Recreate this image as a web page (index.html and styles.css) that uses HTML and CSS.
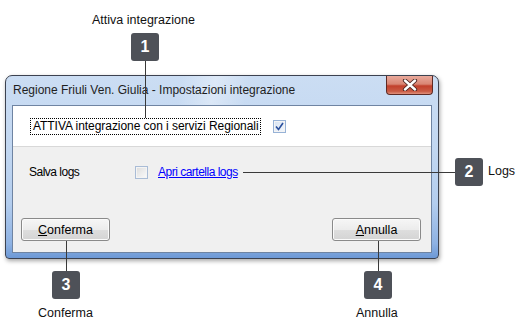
FILE: index.html
```html
<!DOCTYPE html>
<html lang="it">

<head>
  <meta charset="UTF-8">
  <title>Impostazioni integrazione</title>
  <link rel="stylesheet" href="styles.css">
</head>

<body>
  <div class="stage">
    <div class="window">
      <div class="titlebar">
        <span class="title">Regione Friuli Ven. Giulia - Impostazioni integrazione</span>
        <div class="close">
          <svg width="18" height="12" viewBox="0 0 18 12">
            <path d="M4 1.5 L14 10.5 M14 1.5 L4 10.5" stroke="#4a2420" stroke-width="4.2" stroke-linecap="round" />
            <path d="M4 1.5 L14 10.5 M14 1.5 L4 10.5" stroke="#fff" stroke-width="2.4" stroke-linecap="round" />
          </svg>
        </div>
      </div>
      <div class="client">
        <div class="top-panel">
          <span class="focus">ATTIVA integrazione con i servizi Regionali</span>
          <span class="check checked">
            <svg width="9" height="9" viewBox="0 0 9 9">
              <path d="M1 4.5 L3.5 7.5 L8 1" fill="none" stroke="#2a4f9c" stroke-width="1.6" />
            </svg>
          </span>
        </div>
        <div class="main-panel">
          <div class="row">
            <span class="row-label">Salva logs</span>
            <span class="check"></span>
            <a class="link" href="#">Apri cartella logs</a>
          </div>
          <div class="buttons">
            <div class="btn"><u>C</u>onferma</div>
            <div class="btn"><u>A</u>nnulla</div>
          </div>
        </div>
      </div>
    </div>

    <!-- callouts -->
    <div class="note note-1">Attiva integrazione</div>
    <div class="badge badge-1">1</div>
    <div class="vline vline-1"></div>

    <div class="hline hline-2"></div>
    <div class="badge badge-2">2</div>
    <div class="note note-2">Logs</div>

    <div class="vline vline-3"></div>
    <div class="badge badge-3">3</div>
    <div class="note note-3">Conferma</div>

    <div class="vline vline-4"></div>
    <div class="badge badge-4">4</div>
    <div class="note note-4">Annulla</div>
  </div>
</body>

</html>
```

FILE: styles.css
```css
body {
  margin: 0;
  background: #fff;
}

.stage {
  position: relative;
  width: 532px;
  height: 336px;
  overflow: hidden;
  padding-top: 75px;
  box-sizing: border-box;
}

.window {
  margin-left: 5px;
  width: 434px;
  height: 184px;
  box-sizing: border-box;
  border: 1px solid #3c4250;
  border-radius: 7px 7px 4px 4px;
  background: linear-gradient(180deg, #cbddf3 0%, #c2d7f1 40%, #b3cdee 70%, #8eb2e3 92%, #6d99d6 100%);
  box-shadow: 1px 2px 4px rgba(0, 0, 0, 0.35);
  padding: 0 6px 5px 6px;
  display: flex;
  flex-direction: column;
}

.titlebar {
  height: 29px;
  display: flex;
  align-items: center;
  position: relative;
  background: linear-gradient(100deg, transparent 0%, transparent 40%, rgba(255, 255, 255, 0.35) 48%, transparent 56%, transparent 100%);
}

.title {
  font-family: "Liberation Sans", Arial, sans-serif;
  font-size: 12px;
  color: #1e1e1e;
  padding-left: 1px;
  margin-top: -1px;
}

.close {
  position: absolute;
  right: -1px;
  top: 0;
  width: 47px;
  height: 19px;
  box-sizing: border-box;
  border: 1px solid #5e2a24;
  border-top: none;
  border-radius: 0 0 4px 4px;
  background: linear-gradient(180deg, #e9a99b 0%, #d98674 45%, #c2402c 55%, #c95b44 85%, #e0917c 100%);
  display: flex;
  align-items: center;
  justify-content: center;
}

.client {
  flex: 1;
  border: 1px solid #6f84a2;
  background: #f0f0f0;
  display: flex;
  flex-direction: column;
  font-family: "Liberation Sans", Arial, sans-serif;
  font-size: 12px;
  color: #000;
}

.top-panel {
  height: 41px;
  box-sizing: border-box;
  background: #fff;
  border-bottom: 1px solid #d8d8d8;
  display: flex;
  align-items: center;
  padding-left: 17px;
}

.focus {
  border: 1px dotted #000;
  padding: 1px 1px 1px 2px;
  line-height: 13px;
  font-size: 12px;
  letter-spacing: -0.05px;
}

.check {
  width: 13px;
  height: 13px;
  box-sizing: border-box;
  border: 1px solid #8f8f8f;
  background: linear-gradient(135deg, #dcdcdc, #fbfbfb);
  box-shadow: inset 0 0 0 1px #f4f4f4;
  display: inline-flex;
  align-items: center;
  justify-content: center;
}

.check.checked {
  margin-left: 12px;
  border-color: #97b2d6;
  background: linear-gradient(135deg, #d6e2f2, #f5f8fc);
}

.main-panel {
  flex: 1;
  display: flex;
  flex-direction: column;
  justify-content: space-between;
  padding: 18px 10px 11px 8px;
}

.row {
  display: flex;
  align-items: center;
  padding-left: 8px;
}

.row-label {
  width: 106px;
  letter-spacing: -0.5px;
}

.row .check {
  border-color: #a9bcd6;
}

.link {
  color: #0000ff;
  margin-left: 10px;
  letter-spacing: -0.5px;
}

.buttons {
  display: flex;
  justify-content: space-between;
}

.btn {
  width: 89px;
  height: 23px;
  box-sizing: border-box;
  border: 1px solid #8a8a8a;
  border-radius: 3px;
  background: linear-gradient(180deg, #f6f6f6 0%, #ececec 50%, #dedede 51%, #d4d4d4 100%);
  box-shadow: inset 0 0 0 1px #fbfbfb;
  display: flex;
  align-items: center;
  justify-content: center;
  font-size: 12.5px;
}

/* callouts */
.note {
  position: absolute;
  font-family: "Liberation Sans", Arial, sans-serif;
  font-size: 12.5px;
  color: #111;
  white-space: nowrap;
}

.badge {
  position: absolute;
  width: 28px;
  height: 28px;
  border-radius: 3px;
  background: #4e5158;
  color: #fff;
  font-family: "Liberation Sans", Arial, sans-serif;
  font-weight: bold;
  font-size: 16px;
  display: flex;
  align-items: center;
  justify-content: center;
}

.vline {
  position: absolute;
  width: 1px;
  background: #3a3a3a;
}

.hline {
  position: absolute;
  height: 1px;
  background: #3a3a3a;
}

.note-1 {
  left: 92px;
  top: 13px;
}

.badge-1 {
  left: 131px;
  top: 33px;
}

.vline-1 {
  left: 145px;
  top: 61px;
  height: 57px;
}

.hline-2 {
  left: 243px;
  top: 172px;
  width: 212px;
}

.badge-2 {
  left: 455px;
  top: 158px;
}

.note-2 {
  left: 488px;
  top: 164px;
}

.vline-3 {
  left: 66px;
  top: 241px;
  height: 30px;
}

.badge-3 {
  left: 52px;
  top: 271px;
}

.note-3 {
  left: 38px;
  top: 306px;
}

.vline-4 {
  left: 378px;
  top: 241px;
  height: 30px;
}

.badge-4 {
  left: 364px;
  top: 271px;
}

.note-4 {
  left: 356px;
  top: 306px;
}
```
